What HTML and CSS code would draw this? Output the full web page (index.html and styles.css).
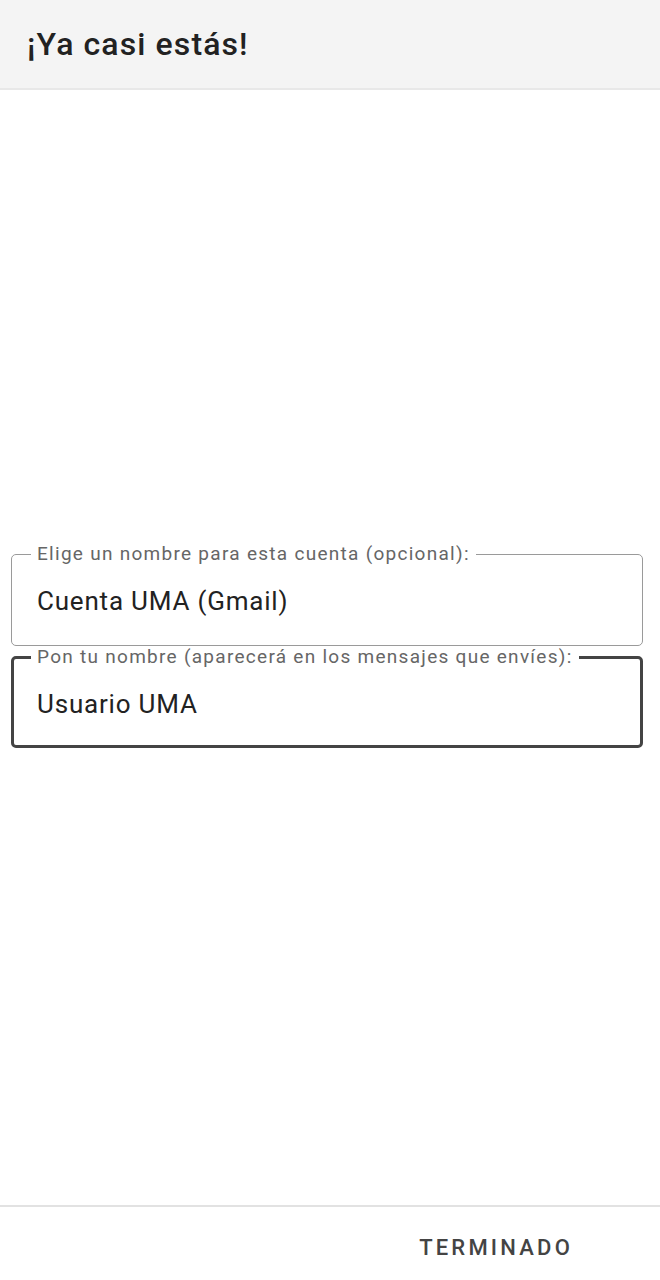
FILE: index.html
```html
<!DOCTYPE html>
<html lang="es">
<head>
<meta charset="utf-8">
<link rel="stylesheet" href="styles.css">
</head>
<body>
<div class="app">
  <header class="topbar">
    <h1 class="title">¡Ya casi estás!</h1>
  </header>
  <main class="content">
    <form class="form">
      <fieldset class="field">
        <legend class="field-label">Elige un nombre para esta cuenta (opcional):</legend>
        <div class="field-value">Cuenta UMA (Gmail)</div>
      </fieldset>
      <fieldset class="field field-focused">
        <legend class="field-label">Pon tu nombre (aparecerá en los mensajes que envíes):</legend>
        <div class="field-value">Usuario UMA</div>
      </fieldset>
    </form>
  </main>
  <footer class="bottombar">
    <button class="done" type="button">TERMINADO</button>
  </footer>
</div>
</body>
</html>
```
FILE: styles.css
```css
* { box-sizing: border-box; }
html, body { margin: 0; padding: 0; }
body {
  font-family: Roboto, "Noto Sans", sans-serif;
  background: #ffffff;
  color: #222;
}
.app {
  height: 1280px;
  display: flex;
  flex-direction: column;
}
.topbar {
  height: 90px;
  background: #f4f4f4;
  border-bottom: 2px solid #e8e8e8;
  display: flex;
  align-items: center;
  padding-left: 27px;
  flex-shrink: 0;
}
.title {
  margin: 0;
  font-size: 32px;
  font-weight: 500;
  color: #222;
  letter-spacing: 1.1px;
}
.content {
  flex: 1;
  display: flex;
  flex-direction: column;
  justify-content: center;
  padding-bottom: 4px;
}
.form {
  display: flex;
  flex-direction: column;
  gap: 0;
  padding: 0 17px 0 11px;
}
.field {
  margin: 0;
  border: 1px solid #9a9a9a;
  border-radius: 5px;
  padding: 0 19px 29px 19px;
  min-width: 0;
}
.field-focused {
  border: 3px solid #444;
  padding: 0 17px 26px 17px;
}
.field-label {
  padding: 0 6px;
  font-size: 19px;
  line-height: 22px;
  letter-spacing: 1.28px;
  color: #666;
}
.field-value {
  padding-left: 6px;
  margin-top: 21px;
  font-size: 26px;
  line-height: 30px;
  letter-spacing: 0.8px;
  color: #222;
}
.bottombar {
  height: 75px;
  border-top: 2px solid #e2e2e2;
  display: flex;
  justify-content: flex-end;
  align-items: center;
  padding: 8px 87px 0 0;
  flex-shrink: 0;
}
.done {
  background: none;
  border: none;
  padding: 0;
  font-family: Roboto, "Noto Sans", sans-serif;
  font-size: 22px;
  font-weight: 500;
  letter-spacing: 3.2px;
  color: #444;
}
```
